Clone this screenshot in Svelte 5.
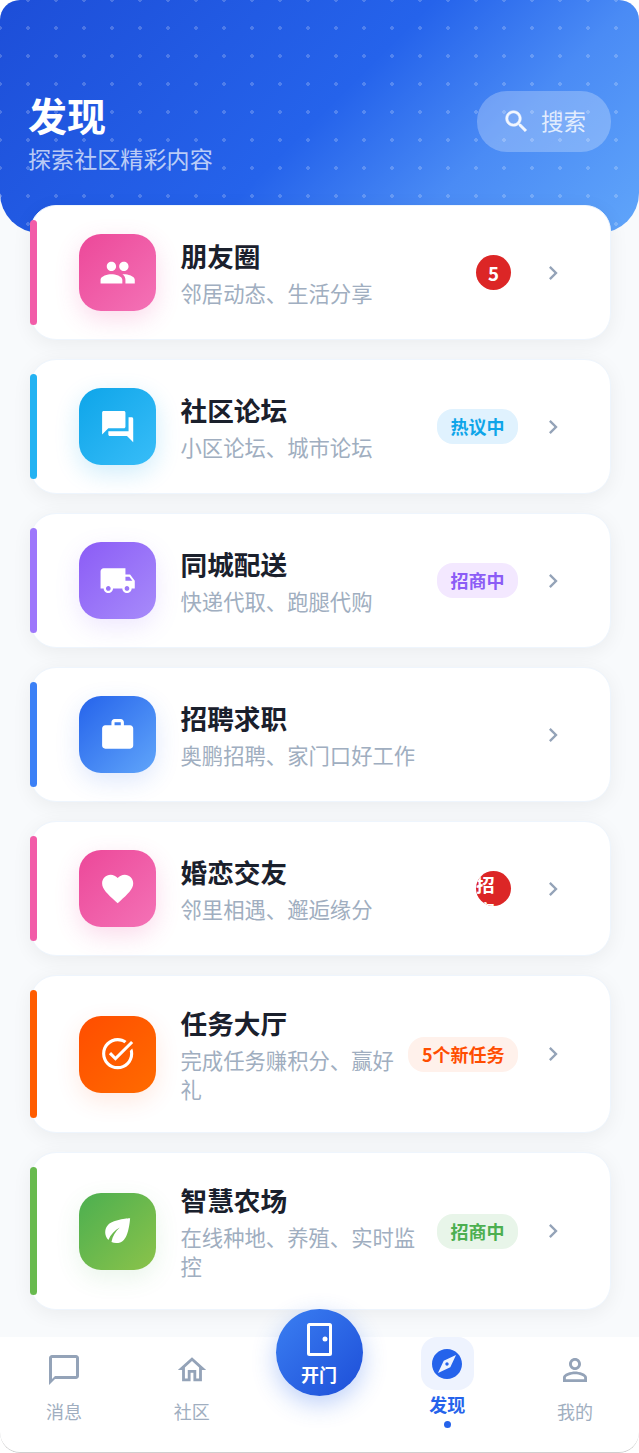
<script>
  const items = [
    { title: "朋友圈", sub: "邻居动态、生活分享", color: "pink", icon: "people", dot: "5" },
    { title: "社区论坛", sub: "小区论坛、城市论坛", color: "sky", icon: "forum", tag: "热议中" },
    { title: "同城配送", sub: "快递代取、跑腿代购", color: "violet", icon: "truck", tag: "招商中" },
    { title: "招聘求职", sub: "奥鹏招聘、家门口好工作", color: "blue", icon: "work" },
    { title: "婚恋交友", sub: "邻里相遇、邂逅缘分", color: "pink", icon: "heart", dot: "招商中" },
    { title: "任务大厅", sub: "完成任务赚积分、赢好礼", color: "orange", icon: "task", tag: "5个新任务" },
    { title: "智慧农场", sub: "在线种地、养殖、实时监控", color: "green", icon: "eco", tag: "招商中" }
  ];

  const icons = {
    people: "M16 11c1.66 0 2.99-1.34 2.99-3S17.66 5 16 5c-1.66 0-3 1.34-3 3s1.34 3 3 3zm-8 0c1.66 0 2.99-1.34 2.99-3S9.66 5 8 5C6.34 5 5 6.34 5 8s1.34 3 3 3zm0 2c-2.33 0-7 1.17-7 3.5V19h14v-2.5c0-2.33-4.67-3.5-7-3.5zm8 0c-.29 0-.62.02-.97.05 1.16.84 1.97 1.97 1.97 3.45V19h6v-2.5c0-2.33-4.67-3.5-7-3.5z",
    forum: "M21 6h-2v9H6v2c0 .55.45 1 1 1h11l4 4V7c0-.55-.45-1-1-1zm-4 6V3c0-.55-.45-1-1-1H3c-.55 0-1 .45-1 1v14l4-4h10c.55 0 1-.45 1-1z",
    truck: "M20 8h-3V4H3c-1.1 0-2 .9-2 2v11h2c0 1.66 1.34 3 3 3s3-1.34 3-3h6c0 1.66 1.34 3 3 3s3-1.34 3-3h2v-5l-3-4zM6 18.5c-.83 0-1.5-.67-1.5-1.5s.67-1.5 1.5-1.5 1.5.67 1.5 1.5-.67 1.5-1.5 1.5zm13.5-9l1.96 2.5H17V9.5h2.5zm-1.5 9c-.83 0-1.5-.67-1.5-1.5s.67-1.5 1.5-1.5 1.5.67 1.5 1.5-.67 1.5-1.5 1.5z",
    work: "M20 6h-4V4c0-1.11-.89-2-2-2h-4c-1.11 0-2 .89-2 2v2H4c-1.11 0-1.99.89-1.99 2L2 19c0 1.11.89 2 2 2h16c1.11 0 2-.89 2-2V8c0-1.11-.89-2-2-2zm-6 0h-4V4h4v2z",
    heart: "M12 21.35l-1.45-1.32C5.4 15.36 2 12.28 2 8.5 2 5.42 4.42 3 7.5 3c1.74 0 3.41.81 4.5 2.09C13.09 3.81 14.76 3 16.5 3 19.58 3 22 5.42 22 8.5c0 3.78-3.4 6.86-8.55 11.54L12 21.35z",
    task: "M22 5.18L10.59 16.6l-4.24-4.24 1.41-1.41 2.83 2.83 10-10L22 5.18zm-2.21 5.04c.13.57.21 1.17.21 1.78 0 4.42-3.58 8-8 8s-8-3.58-8-8 3.58-8 8-8c1.58 0 3.04.46 4.28 1.25l1.44-1.44C16.1 2.67 14.13 2 12 2 6.48 2 2 6.48 2 12s4.48 10 10 10 10-4.48 10-10c0-1.19-.22-2.33-.6-3.39l-1.61 1.61z",
    eco: "M6.05 8.05c-2.73 2.73-2.73 7.15-.02 9.88 1.47-3.4 4.09-6.24 7.36-7.93-2.77 2.34-4.71 5.61-5.39 9.32 2.6 1.23 5.8.78 7.95-1.37C19.43 14.47 20 4 20 4S9.53 4.57 6.05 8.05z",
    chevron: "M10 6L8.59 7.41 13.17 12l-4.58 4.59L10 18l6-6z",
    search: "M15.5 14h-.79l-.28-.27C15.41 12.59 16 11.11 16 9.5 16 5.91 13.09 3 9.5 3S3 5.91 3 9.5 5.91 16 9.5 16c1.61 0 3.09-.59 4.23-1.57l.27.28v.79l5 4.99L20.49 19l-4.99-5zm-6 0C7.01 14 5 11.99 5 9.5S7.01 5 9.5 5 14 7.01 14 9.5 11.99 14 9.5 14z",
    chat: "M20 2H4c-1.1 0-2 .9-2 2v18l4-4h14c1.1 0 2-.9 2-2V4c0-1.1-.9-2-2-2zm0 14H6l-2 2V4h16v12z",
    home: "M12 5.69l5 4.5V18h-2v-6H9v6H7v-7.81l5-4.5M12 3L2 12h3v8h6v-6h2v6h6v-8h3L12 3z",
    explore: "M12 10.9c-.61 0-1.1.49-1.1 1.1s.49 1.1 1.1 1.1c.61 0 1.1-.49 1.1-1.1s-.49-1.1-1.1-1.1zM12 2C6.48 2 2 6.48 2 12s4.48 10 10 10 10-4.48 10-10S17.52 2 12 2zm2.19 12.19L6 18l3.81-8.19L18 6l-3.81 8.19z",
    person: "M12 5.9c1.16 0 2.1.94 2.1 2.1s-.94 2.1-2.1 2.1S9.9 9.16 9.9 8s.94-2.1 2.1-2.1m0 9c2.97 0 6.1 1.46 6.1 2.1v1.1H5.9V17c0-.64 3.13-2.1 6.1-2.1M12 4C9.79 4 8 5.79 8 8s1.79 4 4 4 4-1.79 4-4-1.79-4-4-4zm0 9c-2.67 0-8 1.34-8 4v3h16v-3c0-2.66-5.33-4-8-4z"
  };
</script>

<div class="page">
  <header class="top">
    <div class="top-text">
      <h1>发现</h1>
      <p>探索社区精彩内容</p>
    </div>
    <div class="search">
      <svg viewBox="0 0 24 24" width="29" height="29"><path d={icons.search} /></svg>
      <span>搜索</span>
    </div>
  </header>

  <main class="list">
    {#each items as item}
      <div class="card">
        <i class="bar {item.color}"></i>
        <div class="icon {item.color}">
          <svg viewBox="0 0 24 24" width="37.33" height="37.33"><path d={icons[item.icon]} /></svg>
        </div>
        <div class="info">
          <div class="title">{item.title}</div>
          <div class="sub">{item.sub}</div>
        </div>
        {#if item.dot}
          <div class="dot" class:wrap={item.dot.length > 1}>{item.dot}</div>
        {/if}
        {#if item.tag}
          <div class="tag {item.color}">{item.tag}</div>
        {/if}
        <svg class="chevron" viewBox="0 0 24 24" width="28" height="28"><path d={icons.chevron} /></svg>
      </div>
    {/each}
  </main>

  <nav class="nav">
    <div class="nav-item">
      <div class="nav-icon"><svg viewBox="0 0 24 24" width="36" height="36"><path d={icons.chat} /></svg></div>
      <span>消息</span>
    </div>
    <div class="nav-item">
      <div class="nav-icon"><svg viewBox="0 0 24 24" width="34" height="34"><path d={icons.home} /></svg></div>
      <span>社区</span>
    </div>
    <div class="nav-item center">
      <div class="open">
        <svg viewBox="0 0 25 33" width="25" height="33">
          <rect x="1.5" y="1.5" width="22" height="30" rx="1" fill="none" stroke="#fff" stroke-width="3" />
          <circle cx="18" cy="16" r="2.5" fill="#fff" />
        </svg>
        <span>开门</span>
      </div>
    </div>
    <div class="nav-item active">
      <div class="nav-icon"><svg viewBox="0 0 24 24" width="36" height="36"><path d={icons.explore} /></svg></div>
      <span>发现</span>
      <i class="active-dot"></i>
    </div>
    <div class="nav-item">
      <div class="nav-icon"><svg viewBox="0 0 24 24" width="36" height="36"><path d={icons.person} /></svg></div>
      <span>我的</span>
    </div>
  </nav>
</div>

<style>
  :global(body) {
    background: #fff;
  }

  .page {
    position: relative;
    width: 639px;
    height: 1453px;
    display: flex;
    flex-direction: column;
    background: #f8fafc;
    border-radius: 20px;
    overflow: hidden;
    box-sizing: border-box;
    font-family: "Noto Sans CJK SC", "Noto Sans", sans-serif;
  }

  .top {
    height: 233px;
    flex-shrink: 0;
    box-sizing: border-box;
    padding: 91px 28px 0 28px;
    display: flex;
    justify-content: space-between;
    align-items: flex-start;
    border-radius: 0 0 40px 40px;
    background-image: radial-gradient(circle, rgba(255, 255, 255, 0.2) 1.6px, transparent 2px),
      linear-gradient(135deg, #1d4ed8 0%, #2563eb 50%, #4a8bf5 73%, #60a5fa 100%);
    background-size: 28px 28px, 100% 100%;
    background-position: -14px -14px, 0 0;
  }

  .top h1 {
    margin: -4px 0 0 0;
    color: #fff;
    font-size: 39px;
    line-height: 54px;
    font-weight: 700;
  }

  .top p {
    margin: 1px 0 0 0;
    color: rgba(255, 255, 255, 0.7);
    font-size: 23.1px;
    line-height: 32px;
  }

  .search {
    width: 134px;
    height: 61px;
    border-radius: 30px;
    background: rgba(255, 255, 255, 0.25);
    display: flex;
    align-items: center;
    justify-content: center;
    gap: 10px;
    color: rgba(255, 255, 255, 0.8);
    font-size: 22.5px;
  }

  .search span {
    padding-bottom: 3px;
  }

  .search svg {
    fill: rgba(255, 255, 255, 0.9);
    stroke: rgba(255, 255, 255, 0.9);
    stroke-width: 0.4;
  }

  .list {
    margin-top: -28px;
    padding: 0 28px 0 30px;
    display: flex;
    flex-direction: column;
    gap: 19px;
    position: relative;
  }

  .card {
    position: relative;
    display: flex;
    align-items: center;
    gap: 13px;
    padding: 28px 43px 28px 48px;
    background: #fff;
    border: 1px solid #eef5fd;
    border-radius: 26px;
    box-shadow: 0 4px 20px rgba(0, 0, 0, 0.06);
  }

  .bar {
    position: absolute;
    left: -1px;
    top: 14px;
    bottom: 14px;
    width: 7px;
    border-radius: 4px;
  }

  .bar.pink { background: #f25ca8; }
  .bar.sky { background: #23b2f2; }
  .bar.violet { background: #9d77fb; }
  .bar.blue { background: #3b80f6; }
  .bar.orange { background: #ff5c00; }
  .bar.green { background: #68ba4e; }

  .icon {
    width: 77px;
    height: 77px;
    flex-shrink: 0;
    margin-right: 11.5px;
    border-radius: 22px;
    display: flex;
    align-items: center;
    justify-content: center;
  }

  .icon svg {
    fill: #fff;
  }

  .icon.pink {
    background: linear-gradient(135deg, #ec4899, #f472b6);
    box-shadow: 0 8px 24px rgba(236, 72, 153, 0.2);
  }
  .icon.sky {
    background: linear-gradient(135deg, #0ea5e9, #38bdf8);
    box-shadow: 0 8px 24px rgba(14, 165, 233, 0.2);
  }
  .icon.violet {
    background: linear-gradient(135deg, #8b5cf6, #a78bfa);
    box-shadow: 0 8px 24px rgba(139, 92, 246, 0.15);
  }
  .icon.blue {
    background: linear-gradient(135deg, #2563eb, #60a5fa);
    box-shadow: 0 8px 24px rgba(37, 99, 235, 0.15);
  }
  .icon.orange {
    background: linear-gradient(135deg, #ff4d00, #ff6b00);
    box-shadow: 0 8px 24px rgba(255, 77, 0, 0.12);
  }
  .icon.green {
    background: linear-gradient(135deg, #4caf50, #8bc34a);
    box-shadow: 0 8px 24px rgba(76, 175, 80, 0.12);
  }

  .info {
    flex: 1;
    min-width: 0;
    padding: 1px 0;
  }

  .title {
    font-size: 26.67px;
    line-height: 35px;
    font-weight: 700;
    color: #1a202c;
  }

  .sub {
    margin-top: 5px;
    font-size: 21.33px;
    line-height: 29px;
    color: #a0aec0;
  }

  .dot {
    width: 35px;
    height: 35px;
    flex-shrink: 0;
    margin-right: 7px;
    border-radius: 50%;
    overflow: hidden;
    background: #dc2626;
    color: #fff;
    font-size: 18.67px;
    font-weight: 700;
    line-height: 35px;
    text-align: center;
  }

  .dot.wrap {
    text-align: left;
    line-height: 26px;
  }

  .tag {
    flex-shrink: 0;
    padding: 0 13.5px;
    height: 35px;
    border-radius: 16px;
    font-size: 18px;
    font-weight: 700;
    line-height: 35px;
    white-space: nowrap;
  }

  .tag.sky { background: #e0f2fe; color: #0ea5e9; }
  .tag.violet { background: #f3e8ff; color: #8b5cf6; }
  .tag.orange { background: #fff1eb; color: #ff4d00; }
  .tag.green { background: #e8f5e9; color: #4caf50; }

  .chevron {
    flex-shrink: 0;
    margin-left: 8px;
    fill: #94a3b8;
  }

  .nav {
    position: absolute;
    left: 0;
    right: 0;
    bottom: 0;
    height: 116px;
    display: grid;
    grid-template-columns: repeat(5, 1fr);
    background: #fff;
    border-radius: 0 0 20px 20px;
    box-shadow: inset 0 -1px 0 #cfcfcf;
  }

  .nav-item {
    position: relative;
    display: flex;
    flex-direction: column;
    align-items: center;
    color: #a0aec0;
    font-size: 18px;
  }

  .nav-icon {
    width: 53px;
    height: 53px;
    border-radius: 16px;
    display: flex;
    align-items: center;
    justify-content: center;
    margin-top: 6px;
    margin-bottom: 2px;
  }

  .nav-icon svg {
    fill: #94a3b8;
  }

  .nav-item.active {
    color: #2563eb;
    font-weight: 700;
  }

  .nav-item.active .nav-icon {
    margin-top: 0;
    margin-bottom: 1px;
    background: #eef3fe;
  }

  .nav-item.active .nav-icon svg {
    fill: #2563eb;
  }

  .active-dot {
    width: 7px;
    height: 7px;
    margin-top: 4px;
    border-radius: 50%;
    background: #2563eb;
  }

  .open {
    position: absolute;
    top: -28px;
    left: 20px;
    width: 87px;
    height: 87px;
    border-radius: 50%;
    background: linear-gradient(135deg, #3b7ff2, #1d4ed8);
    box-shadow: 0 8px 24px rgba(37, 99, 235, 0.3);
    display: flex;
    flex-direction: column;
    align-items: center;
    color: #fff;
    font-size: 18px;
    font-weight: 700;
    padding-top: 14px;
    box-sizing: border-box;
  }

  .open span {
    margin-top: 5px;
  }

  .open svg {
    fill: #fff;
  }
</style>
